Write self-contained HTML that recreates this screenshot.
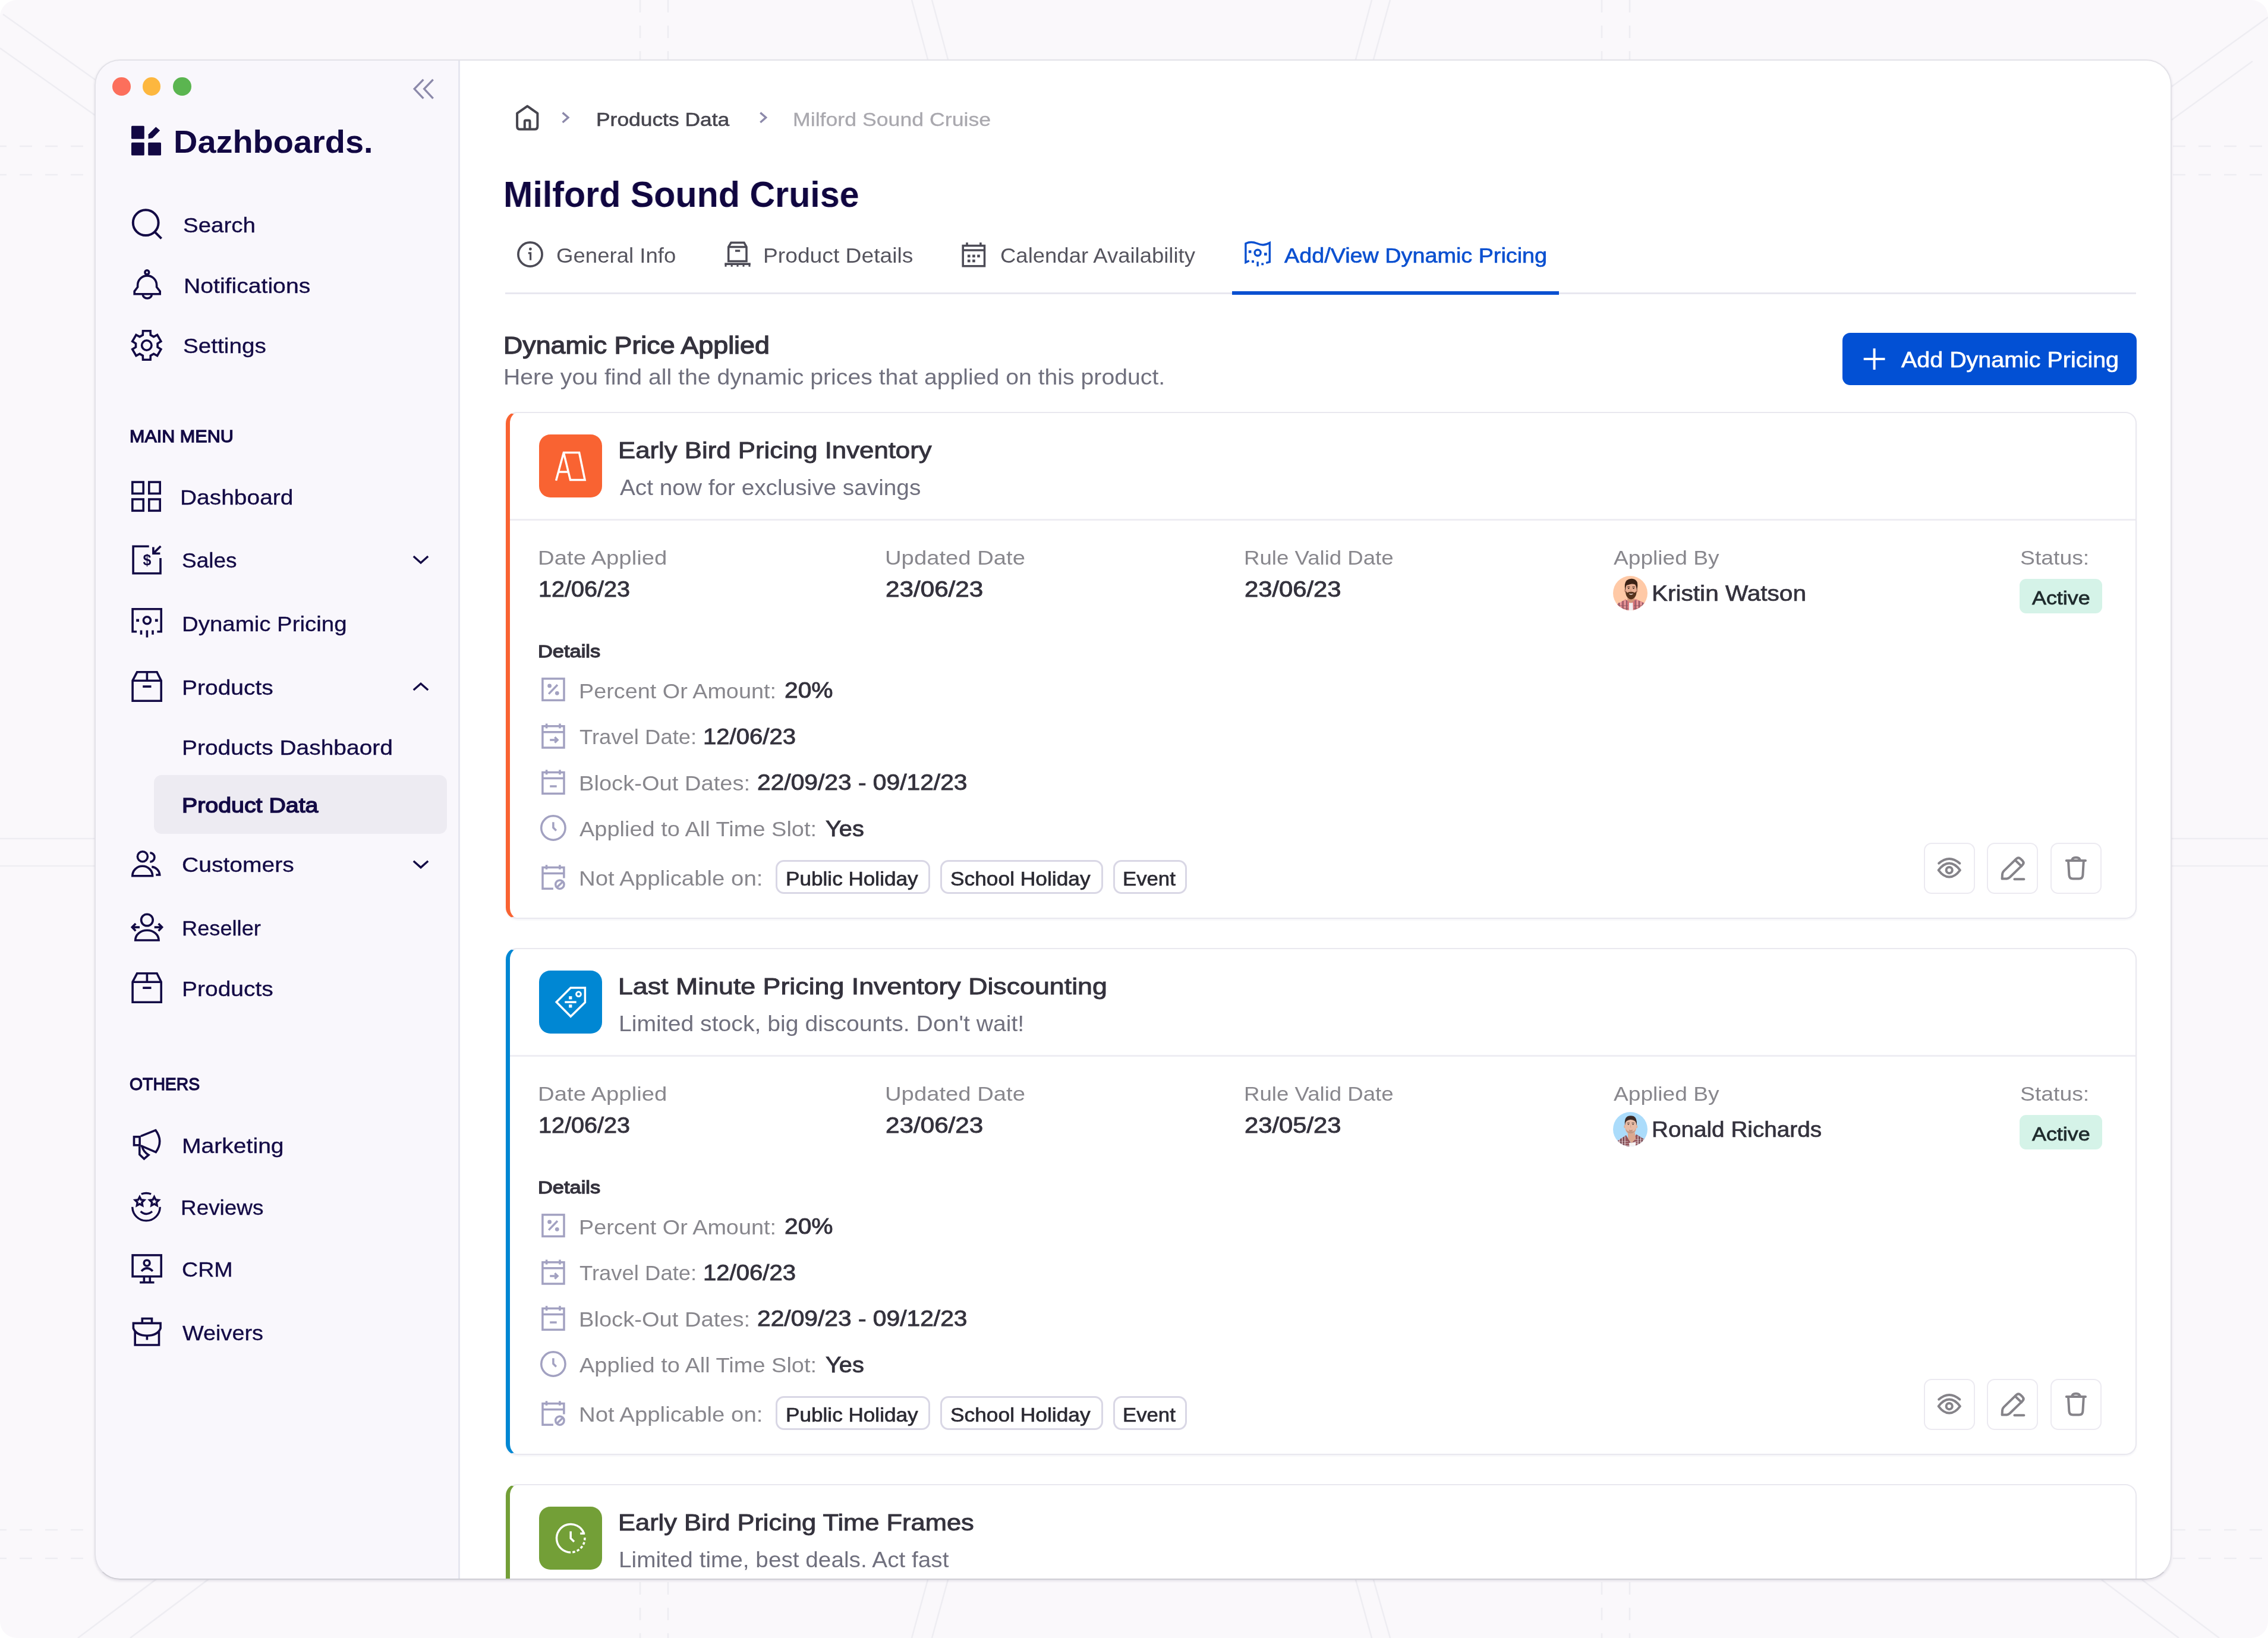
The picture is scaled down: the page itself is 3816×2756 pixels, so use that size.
<!DOCTYPE html>
<html lang="en">
<head>
<meta charset="utf-8">
<title>Dazhboards - Milford Sound Cruise - Dynamic Pricing</title>
<style>
*{box-sizing:border-box;margin:0;padding:0}
html,body{width:3816px;height:2756px;overflow:hidden}
body{position:relative;background:#faf8fb;font-family:"Liberation Sans",sans-serif;-webkit-font-smoothing:antialiased}
.bg{position:absolute;left:0;top:0}
.win{position:absolute;left:160px;top:101px;width:3493px;height:2556px;border-radius:42px;overflow:hidden;background:#fff}
.abs{position:absolute;left:-160px;top:-101px;width:3816px;height:2756px;will-change:transform}
.frame{position:absolute;left:159px;top:100px;width:3494.6px;height:2558.4px;border-radius:43px;border:2px solid #e3e2e8;border-bottom-color:#cfced5;pointer-events:none;box-shadow:0 2px 4px rgba(40,30,70,.12)}
.side{position:absolute;left:160px;top:101px;width:612px;height:2556px;background:#f9f7fc}
.sdiv{position:absolute;left:771.4px;top:101px;width:2.8px;height:2556px;background:#e6e6f0}
.t{position:absolute;white-space:nowrap;line-height:1;transform-origin:0 0}
.i{position:absolute;overflow:visible}
.dot{position:absolute;width:30.6px;height:30.6px;border-radius:50%}
.hl{position:absolute;background:#edebf2;border-radius:13px}
.tabline{position:absolute;background:#e8e7ef}
.tabact{position:absolute;background:#0b50d0}
.btn{position:absolute;background:#0250d4;border-radius:13px}
.card{position:absolute;background:#fff;border:2px solid #e9e8ef;border-left-width:7.4px;border-radius:19px;box-shadow:0 2px 3px rgba(70,60,120,.06)}
.tile{position:absolute;width:106.4px;height:106.4px;border-radius:19px}
.hr{position:absolute;height:2.8px;background:#eeedf3}
.badge{position:absolute;background:#d5f3e8;border-radius:11px}
.chip{position:absolute;border:3px solid #d9d7e5;border-radius:14px;background:#fff}
.abtn{position:absolute;width:86px;height:86px;border:2.6px solid #eceaf1;border-radius:13px;background:#fff}
</style>
</head>
<body>
<svg class="bg" width="3816" height="2756" viewBox="0 0 3816 2756" fill="none" stroke="#eeedf2" stroke-width="2.6">
<path d="M5 24 160 134M0 81 160 194M3816 29 3652 147M3790 103 3652 203M263 2657 131 2756M351 2657 219 2756M3536 2658 3666 2756M3604 2658 3734 2756"/>
<path d="M0 1411H160M0 1457H160M3654 1411H3816M3654 1457H3816"/>
<path d="M1534 0 1561 100M1568 0 1595 100M2308 0 2281 100M2339 0 2311 100M1561 2658 1534 2756M1595 2658 1568 2756M2281 2658 2308 2756M2311 2658 2339 2756"/>
<path stroke-dasharray="21 22" d="M140 246H0M140 294H0M3656 246H3816M3656 294H3816M140 2574H0M140 2622H0M3656 2574H3816M3656 2622H3816"/>
<path stroke-dasharray="21 22" d="M1077 0V100M1124 0V100M2695 0V100M2742 0V100M1077 2662V2756M1124 2662V2756M2695 2662V2756M2742 2662V2756"/>
<path fill="#fff" stroke="none" d="M0 0H28A28 28 0 0 0 0 28ZM3816 0V28A28 28 0 0 0 3788 0ZM0 2756V2728A28 28 0 0 0 28 2756ZM3816 2756H3788A28 28 0 0 0 3816 2728Z"/>
</svg>
<div class="win"><div class="abs">
<aside>
<div class="side"></div>
<div class="dot" style="left:189.1px;top:130.0px;background:#fc6f5c"></div>
<div class="dot" style="left:239.89999999999998px;top:130.0px;background:#fdb73f"></div>
<div class="dot" style="left:291.0px;top:130.0px;background:#5bb550"></div>
<svg class="i" style="left:690px;top:128px" width="46" height="44" viewBox="690 128 46 44" fill="none" stroke="#8c89aa" stroke-width="3.4" ><path d="M712.4 133.9 697.2 149.6 712.4 165.6M728.7 133.9 713.7 149.6 728.7 165.6"/></svg>
<svg class="i" style="left:221px;top:211px" width="52" height="52" viewBox="221 211 52 52" fill="#120843" stroke="none" stroke-width="0" ><rect x="221" y="211.8" width="21.8" height="22" rx="1.5"/><rect x="221" y="239.7" width="21.8" height="21.9" rx="1.5"/><rect x="249.2" y="239.7" width="21.8" height="21.9" rx="1.5"/><path d="M249.6 233.4 249.6 226.2 262.3 213.6 269.2 219.4 256.6 232.2Z"/></svg>
<div class="hl" style="left:259px;top:1303.7px;width:492.7px;height:99px"></div>
<svg class="i" style="left:219px;top:349px" width="58" height="58" viewBox="219 349 58 58" fill="none" stroke="#130a45" stroke-width="4" ><circle cx="245.2" cy="374.7" r="21.4"/><path d="M260.8 390.6 271.6 401.4"/></svg>
<svg class="i" style="left:219px;top:450px" width="58" height="58" viewBox="219 450 58 58" fill="none" stroke="#130a45" stroke-width="3.6" ><circle cx="247.3" cy="458.2" r="3.4"/><path d="M226.2 494.8V490.2L231.6 483V479.9A16 16 0 0 1 263.6 479.9V483L269.2 490.2V494.8Z"/><path d="M240.3 495.4A7.5 6.6 0 0 0 255.3 495.4"/></svg>
<svg class="i" style="left:217px;top:551px" width="62" height="62" viewBox="217 551 62 62" fill="none" stroke="#130a45" stroke-width="3.6" ><path d="M253.3 563.6 253.1 556.8 240.5 556.8 240.3 563.6 235.0 566.6 229.0 563.5 222.7 574.3 228.5 577.9 228.5 584.1 222.7 587.7 229.0 598.5 235.0 595.4 240.3 598.4 240.5 605.2 253.1 605.2 253.3 598.4 258.6 595.4 264.6 598.5 270.9 587.7 265.1 584.1 265.1 577.9 270.9 574.3 264.6 563.5 258.6 566.6Z" stroke-linejoin="miter"/><circle cx="246.8" cy="581" r="8.2"/></svg>
<svg class="i" style="left:219px;top:807px" width="56" height="58" viewBox="219 807 56 58" fill="none" stroke="#130a45" stroke-width="3.6" ><rect x="222.8" y="811.1" width="18.4" height="19.3"/><rect x="250.8" y="811.1" width="18.4" height="19.3"/><rect x="222.8" y="840" width="18.4" height="19.3"/><rect x="250.8" y="840" width="18.4" height="19.3"/></svg>
<svg class="i" style="left:219px;top:914px" width="58" height="56" viewBox="219 914 58 56" fill="none" stroke="#130a45" stroke-width="3.6" ><path d="M250.7 919.2H224.1V964.7H270V939"/><path d="M270.4 919 258.4 930.6M257.9 920.4V931.2H269.4"/><text x="247.4" y="950.6" text-anchor="middle" font-family="Liberation Sans, sans-serif" font-weight="700" font-size="25" fill="#130a45" stroke="none">$</text></svg>
<svg class="i" style="left:219px;top:1020px" width="58" height="56" viewBox="219 1020 58 56" fill="none" stroke="#130a45" stroke-width="3.6" ><path d="M230.1 1062.8H223.1V1024.7H271.2V1062.8H264.4"/><circle cx="247.4" cy="1043.8" r="6"/><path d="M237.5 1060.6V1067.7M247.4 1060.6V1072.6M257 1060.6V1067.7"/><rect x="229.2" y="1041.5" width="4.8" height="4.6" fill="#130a45" stroke="none"/><rect x="260.9" y="1041.5" width="4.8" height="4.6" fill="#130a45" stroke="none"/></svg>
<svg class="i" style="left:219px;top:1126.2px" width="58" height="58" viewBox="219 1126.2 58 58" fill="none" stroke="#130a45" stroke-width="3.6" ><path d="M223.1 1145.4 230.6 1131.0H264L271.2 1145.4V1179.4H223.1Z M223.1 1145.4H271.2 M247.4 1131.0V1145.4 M240.2 1155.3H254.5"/></svg>
<svg class="i" style="left:219px;top:1633.3px" width="58" height="58" viewBox="219 1633.3 58 58" fill="none" stroke="#130a45" stroke-width="3.6" ><path d="M223.1 1652.5 230.6 1638.1H264L271.2 1652.5V1686.5H223.1Z M223.1 1652.5H271.2 M247.4 1638.1V1652.5 M240.2 1662.3999999999999H254.5"/></svg>
<svg class="i" style="left:690px;top:930px" width="36" height="24" viewBox="690 930 36 24" fill="none" stroke="#130a45" stroke-width="3.4" ><path d="M695.8 936 708 947 720.2 936"/></svg>
<svg class="i" style="left:690px;top:1144px" width="36" height="24" viewBox="690 1144 36 24" fill="none" stroke="#130a45" stroke-width="3.4" ><path d="M695.8 1161 708 1150.3 720.2 1161"/></svg>
<svg class="i" style="left:690px;top:1442px" width="36" height="24" viewBox="690 1442 36 24" fill="none" stroke="#130a45" stroke-width="3.4" ><path d="M695.8 1448.7 708 1459.6 720.2 1448.7"/></svg>
<svg class="i" style="left:219px;top:1428px" width="58" height="52" viewBox="219 1428 58 52" fill="none" stroke="#130a45" stroke-width="3.6" ><circle cx="239.9" cy="1441.2" r="8.5"/><path d="M222.8 1473.7A16.9 16.4 0 0 1 256.6 1473.7Z"/><path d="M252.4 1434.9A7.6 7.6 0 0 1 252.4 1450.1"/><path d="M255.3 1458.4A14.6 14.6 0 0 1 268.7 1472H262.3"/></svg>
<svg class="i" style="left:217px;top:1534px" width="62" height="54" viewBox="217 1534 62 54" fill="none" stroke="#130a45" stroke-width="3.6" ><circle cx="247.4" cy="1548" r="9.8"/><path d="M227.7 1582A19.7 16.8 0 0 1 267.1 1582Z"/><path d="M222.6 1560.1H235M228.3 1554 222.3 1560.1 228.3 1566.2M259.7 1560.1H272.3M266.6 1554 272.6 1560.1 266.6 1566.2"/></svg>
<svg class="i" style="left:219px;top:1896px" width="58" height="60" viewBox="219 1896 58 60" fill="none" stroke="#130a45" stroke-width="3.6" ><rect x="225.5" y="1912.7" width="9.6" height="14.1"/><path d="M236.9 1911.6 261.8 1901.6Q275.4 1920 262.2 1938.6L236.9 1927.6"/><path d="M234.8 1928.5V1942.6L242.4 1949.8 250 1943.2Q241.3 1938 239.3 1929.6"/></svg>
<svg class="i" style="left:219px;top:2002px" width="58" height="58" viewBox="219 2002 58 58" fill="none" stroke="#130a45" stroke-width="3.4" ><path d="M222.8 2030.7A23.2 23.2 0 0 0 269.2 2030.7"/><path d="M237.8 2009A23.2 23.2 0 0 1 254.2 2009"/><path d="M235.0 2013.8 232.6 2018.6 227.4 2019.3 231.2 2023.0 230.3 2028.3 235.0 2025.8 239.7 2028.3 238.8 2023.0 242.6 2019.3 237.4 2018.6Z" stroke-linejoin="miter"/><path d="M259.5 2013.8 257.1 2018.6 251.9 2019.3 255.7 2023.0 254.8 2028.3 259.5 2025.8 264.2 2028.3 263.3 2023.0 267.1 2019.3 261.9 2018.6Z" stroke-linejoin="miter"/><path d="M236.6 2038.2Q246 2046.6 256 2038.2"/></svg>
<svg class="i" style="left:219px;top:2107px" width="58" height="56" viewBox="219 2107 58 56" fill="none" stroke="#130a45" stroke-width="3.6" ><rect x="223.1" y="2111.9" width="48.1" height="35.8"/><path d="M242.4 2148.5V2157M252.3 2148.5V2157M235.1 2157.7H259.5"/><circle cx="247.1" cy="2125.1" r="4.9"/><path d="M237.9 2138.8Q247.3 2129 256.9 2138.8"/></svg>
<svg class="i" style="left:219px;top:2213px" width="58" height="56" viewBox="219 2213 58 56" fill="none" stroke="#130a45" stroke-width="3.6" ><path d="M239.3 2226V2218.5H255.5V2226"/><path d="M224.4 2226.4H270.1V2235Q265 2247.2 247.4 2247.2 229.5 2247.2 224.4 2235Z"/><path d="M227.2 2240V2263H267.5V2240M247.4 2247.2V2254.4"/></svg>
<div class="t" style="left:291.9px;top:212.3px;font-size:54.4px;color:#120843;font-weight:700;transform:scaleX(1.0281)">Dazhboards.</div>
<div class="t" style="left:307.9px;top:362.3px;font-size:35.9px;color:#130a45;transform:scaleX(1.0717);-webkit-text-stroke:0.35px #130a45">Search</div>
<div class="t" style="left:308.8px;top:463.9px;font-size:35.9px;color:#130a45;transform:scaleX(1.0907);-webkit-text-stroke:0.35px #130a45">Notifications</div>
<div class="t" style="left:307.9px;top:564.6px;font-size:35.9px;color:#130a45;transform:scaleX(1.078);-webkit-text-stroke:0.35px #130a45">Settings</div>
<div class="t" style="left:218.2px;top:718.5px;font-size:29.3px;color:#130a45;transform:scaleX(1.0423);-webkit-text-stroke:1.3px #130a45">MAIN MENU</div>
<div class="t" style="left:303.4px;top:819.9px;font-size:35.9px;color:#130a45;transform:scaleX(1.0844);-webkit-text-stroke:0.35px #130a45">Dashboard</div>
<div class="t" style="left:305.7px;top:926.3px;font-size:35.9px;color:#130a45;transform:scaleX(1.0315);-webkit-text-stroke:0.35px #130a45">Sales</div>
<div class="t" style="left:306.3px;top:1033.3px;font-size:35.9px;color:#130a45;transform:scaleX(1.0704);-webkit-text-stroke:0.35px #130a45">Dynamic Pricing</div>
<div class="t" style="left:306.2px;top:1139.6px;font-size:35.9px;color:#130a45;transform:scaleX(1.0859);-webkit-text-stroke:0.35px #130a45">Products</div>
<div class="t" style="left:306.2px;top:1240.6px;font-size:35.9px;color:#130a45;transform:scaleX(1.0847);-webkit-text-stroke:0.35px #130a45">Products Dashbaord</div>
<div class="t" style="left:306.2px;top:1337.6px;font-size:35.9px;color:#130a45;transform:scaleX(1.0954);-webkit-text-stroke:1.5px #130a45">Product Data</div>
<div class="t" style="left:305.6px;top:1438.3px;font-size:35.9px;color:#130a45;transform:scaleX(1.0876);-webkit-text-stroke:0.35px #130a45">Customers</div>
<div class="t" style="left:306.4px;top:1544.9px;font-size:35.9px;color:#130a45;transform:scaleX(1.0093);-webkit-text-stroke:0.35px #130a45">Reseller</div>
<div class="t" style="left:306.2px;top:1646.6px;font-size:35.9px;color:#130a45;transform:scaleX(1.0859);-webkit-text-stroke:0.35px #130a45">Products</div>
<div class="t" style="left:218.3px;top:1809.2px;font-size:29.3px;color:#130a45;transform:scaleX(0.9682);-webkit-text-stroke:1.3px #130a45">OTHERS</div>
<div class="t" style="left:306.2px;top:1910.9px;font-size:35.9px;color:#130a45;transform:scaleX(1.089);-webkit-text-stroke:0.35px #130a45">Marketing</div>
<div class="t" style="left:304.2px;top:2014.9px;font-size:35.9px;color:#130a45;transform:scaleX(1.028);-webkit-text-stroke:0.35px #130a45">Reviews</div>
<div class="t" style="left:305.7px;top:2119.3px;font-size:35.9px;color:#130a45;transform:scaleX(1.0483);-webkit-text-stroke:0.35px #130a45">CRM</div>
<div class="t" style="left:306.7px;top:2225.9px;font-size:35.9px;color:#130a45;transform:scaleX(1.0545);-webkit-text-stroke:0.35px #130a45">Weivers</div>
<div class="sdiv"></div>
</aside>
<main>
<header>
<svg class="i" style="left:864px;top:172px" width="48" height="52" viewBox="864 172 48 52" fill="none" stroke="#46454e" stroke-width="4" stroke-linejoin="round"><path d="M870.1 190.6 887.3 178.6 904.4 190.6V212.4Q904.4 217.5 899.3 217.5H875.2Q870.1 217.5 870.1 212.4Z"/><path d="M882.8 217V204.5Q882.8 202.6 884.7 202.6H889.6Q891.5 202.6 891.5 204.5V217"/></svg>
<svg class="i" style="left:940px;top:184px" width="24" height="28" viewBox="940 184 24 28" fill="none" stroke="#8c89aa" stroke-width="3.4" ><path d="M946.6 189.6 956 197.8 946.6 206"/></svg>
<svg class="i" style="left:1272px;top:184px" width="24" height="28" viewBox="1272 184 24 28" fill="none" stroke="#8c89aa" stroke-width="3.4" ><path d="M1279.3 189.6 1288.7 197.8 1279.3 206"/></svg>
<div class="tabline" style="left:850px;top:491.7px;width:2744px;height:3.6px"></div>
<div class="tabact" style="left:2072.5px;top:490px;width:550px;height:6px"></div>
<svg class="i" style="left:866px;top:402px" width="52" height="52" viewBox="866 402 52 52" fill="none" stroke="#4c4b56" stroke-width="3.7" ><circle cx="892" cy="428" r="20.1"/><circle cx="892.4" cy="419" r="2.4" fill="#4c4b56" stroke="none"/><path d="M888.8 425.9H892.6V437.8" stroke-width="3.2"/></svg>
<svg class="i" style="left:1215px;top:402px" width="52" height="50" viewBox="1215 402 52 50" fill="none" stroke="#4c4b56" stroke-width="3.5" ><path d="M1225.7 415.4 1230 408.3H1252L1256 415.4V439.4H1225.7Z M1225.7 415.4H1256 M1237 421.9H1245.2"/><path d="M1219.3 444.2H1262.8" stroke-width="3.8"/><path d="M1221 445V448.7M1231.2 445V448.7M1241 445V448.7M1251 445V448.7M1261 445V448.7" stroke-width="3"/></svg>
<svg class="i" style="left:1614px;top:404px" width="50" height="50" viewBox="1614 404 50 50" fill="none" stroke="#4c4b56" stroke-width="3.5" ><rect x="1620.2" y="413.4" width="36.3" height="34.3"/><path d="M1620.2 421H1656.5M1627 408V414.4M1649.9 408V414.4"/><rect x="1627.9" y="428.5" width="4.6" height="4.6" fill="#4c4b56" stroke="none"/><rect x="1636.1000000000001" y="428.5" width="4.6" height="4.6" fill="#4c4b56" stroke="none"/><rect x="1644.2" y="428.5" width="4.6" height="4.6" fill="#4c4b56" stroke="none"/><rect x="1627.9" y="436.7" width="4.6" height="4.6" fill="#4c4b56" stroke="none"/><rect x="1636.1000000000001" y="436.7" width="4.6" height="4.6" fill="#4c4b56" stroke="none"/></svg>
<svg class="i" style="left:2090px;top:402px" width="54" height="52" viewBox="2090 402 54 52" fill="none" stroke="#0b50d0" stroke-width="3.4" ><path d="M2101.8 438.8 2095.9 441.5V409.7C2101 407.2 2108 406.7 2114.9 409.5S2127.5 413.6 2136.3 408.6V440.6L2130.2 442.3"/><circle cx="2116.1" cy="425.2" r="5"/><path d="M2116.1 440.2V448.2"/><g fill="#0b50d0" stroke="none"><rect x="2100.8" y="421.2" width="4.6" height="4.5"/><rect x="2127" y="425.3" width="4.7" height="4.6"/><rect x="2106" y="438" width="4" height="4"/><rect x="2122.3" y="442.4" width="3.8" height="3.8"/></g></svg>
<div class="btn" style="left:3100.2px;top:560.2px;width:494.8px;height:87.5px"></div>
<svg class="i" style="left:3130px;top:582px" width="48" height="44" viewBox="3130 582 48 44" fill="none" stroke="#fff" stroke-width="4" ><path d="M3153.6 586.2V622M3135.7 604H3171.5"/></svg>
<div class="t" style="left:1002.7px;top:185.9px;font-size:31.2px;color:#46454e;transform:scaleX(1.1346);-webkit-text-stroke:0.6px #46454e">Products Data</div>
<div class="t" style="left:1334.4px;top:185.9px;font-size:31.2px;color:#a9a8ae;transform:scaleX(1.1439);-webkit-text-stroke:0.3px #a9a8ae">Milford Sound Cruise</div>
<div class="t" style="left:847.1px;top:297.1px;font-size:60.5px;color:#100640;font-weight:700;transform:scaleX(0.9785)">Milford Sound Cruise</div>
<div class="t" style="left:935.7px;top:412.6px;font-size:35.9px;color:#55545e;transform:scaleX(1.0191)">General Info</div>
<div class="t" style="left:1283.6px;top:412.6px;font-size:35.9px;color:#55545e;transform:scaleX(1.0369)">Product Details</div>
<div class="t" style="left:1682.5px;top:413.1px;font-size:35.9px;color:#55545e;transform:scaleX(1.0168)">Calendar Availability</div>
<div class="t" style="left:2161.0px;top:413.1px;font-size:35.9px;color:#0b50d0;transform:scaleX(1.052);-webkit-text-stroke:0.7px #0b50d0">Add/View Dynamic Pricing</div>
<div class="t" style="left:846.7px;top:560.9px;font-size:41.1px;color:#34323d;transform:scaleX(1.0893);-webkit-text-stroke:1.35px #34323d">Dynamic Price Applied</div>
<div class="t" style="left:846.8px;top:617.3px;font-size:36.9px;color:#70707e;transform:scaleX(1.0623)">Here you find all the dynamic prices that applied on this product.</div>
<div class="t" style="left:3199.4px;top:587.8px;font-size:36.9px;color:#ffffff;transform:scaleX(1.069);-webkit-text-stroke:0.7px #ffffff">Add Dynamic Pricing</div>
</header>
<section>
<div class="card" style="left:851px;top:692.6px;width:2743.6px;height:853px;border-left-color:#f96332"></div>
<div class="tile" style="left:906.9px;top:731.1px;background:#f96332"></div>
<svg class="i" style="left:906.9px;top:731.1px" width="106.4" height="106.4" viewBox="906.9 731.1 106.4 106.4" fill="none" stroke="#fff" stroke-width="3.5" ><path d="M935.5 808.7 948.3 761.7H974.5L984.0 807.7H959.5L948.3 761.7M940.1 794.2H955.5"/></svg>
<div class="hr" style="left:858px;top:873.3px;width:2734.6px"></div>
<svg class="i" style="left:2713.8px;top:969px" width="58" height="58" viewBox="2713.8 969 58 58"><defs><clipPath id="av1998"><circle cx="2742.8" cy="998" r="29"/></clipPath><filter id="fav1998" x="-5%" y="-5%" width="110%" height="110%"><feGaussianBlur stdDeviation=".45"/></filter></defs><g clip-path="url(#av1998)"><rect x="2713.8" y="969" width="58" height="58" fill="#ffc9a6"/><g filter="url(#fav1998)"><path d="M 2717.8 1018.0 L 2734.8 1008.5 L 2743.8 1014.0 L 2751.8 1008.0 L 2768.8 1015.5 L 2768.8 1029.0 L 2717.8 1029.0 Z" fill="#d8747a"/><path d="M 2723.8 1014.0 L 2723.8 1029.0 M 2730.3 1011.0 L 2730.3 1029.0 M 2736.8 1010.0 L 2736.8 1029.0 M 2751.3 1010.0 L 2751.3 1029.0 M 2757.8 1011.0 L 2757.8 1029.0 M 2763.8 1014.0 L 2763.8 1029.0" stroke="#7a5a68" stroke-width="1.8" opacity=".8"/><path d="M 2726.8 1012.0 L 2726.8 1029.0 M 2733.8 1010.0 L 2733.8 1029.0 M 2754.8 1010.0 L 2754.8 1029.0 M 2760.8 1013.0 L 2760.8 1029.0" stroke="#f6cfcb" stroke-width="1.3" opacity=".8"/><path d="M 2718.8 1019.0 L 2738.8 1019.0 M 2718.8 1024.0 L 2739.8 1024.0 M 2748.8 1019.0 L 2767.8 1019.0 M 2747.8 1024.0 L 2767.8 1024.0" stroke="#8e5560" stroke-width="1.3" opacity=".6"/><path d="M 2740.8 1014.0 L 2747.2 1014.0 L 2747.6 1029.0 L 2740.4 1029.0 Z" fill="#f1eef0"/><path d="M 2738.4 1002.0 L 2749.8 1002.0 L 2750.2 1010.0 L 2744.0 1015.0 L 2738.0 1010.0 Z" fill="#d39578"/><ellipse cx="2734.2000000000003" cy="994" rx="1.8" ry="2.6" fill="#dc9e82"/><ellipse cx="2754.0" cy="994" rx="1.8" ry="2.6" fill="#dc9e82"/><path d="M 2734.1 993.0 Q 2732.1 981.0 2736.8 976.6 Q 2740.8 973.2 2745.8 973.8 Q 2751.8 974.4 2754.3 979.0 Q 2756.0 983.0 2754.1 993.0 Z" fill="#3b2118"/><path d="M 2734.6 993.0 Q 2734.8 987.6 2736.4 984.8 Q 2738.2 984.2 2741.8 983.2 Q 2746.8 981.6 2751.2 983.8 Q 2753.2 986.6 2753.6 993.0 Q 2753.6 1006.4 2744.1 1006.4 Q 2734.6 1006.4 2734.6 993.0 Z" fill="#e8ae92"/><path d="M 2734.6 993.0 Q 2734.8 1002.0 2738.3 1005.5 Q 2741.3 1008.4 2744.1 1008.4 Q 2747.0 1008.4 2750.0 1005.5 Q 2753.4 1002.0 2753.6 993.0 Q 2752.4 996.4 2750.2 997.2 Q 2747.2 995.6 2744.1 995.8 Q 2741.0 995.6 2738.0 997.2 Q 2735.8 996.4 2734.6 993.0 Z" fill="#55301f"/><path d="M 2740.8 999.2 Q 2744.1 1001.6 2747.4 999.2 Q 2744.1 1000.0 2740.8 999.2 Z" fill="#f4e4dc" stroke="#f4e4dc" stroke-width=".6"/><ellipse cx="2740.0" cy="989.9" rx="1.4" ry=".95" fill="#3a241c"/><ellipse cx="2748.3" cy="989.9" rx="1.4" ry=".95" fill="#3a241c"/><path d="M 2737.8 987.8 Q 2740.0 986.7 2742.2 987.7 M 2746.1 987.7 Q 2748.3 986.7 2750.5 987.8" stroke="#4a2b1f" stroke-width="1.1" fill="none"/><path d="M 2744.1 990.5 L 2743.5 994.3 L 2744.8 994.5" stroke="#cf9478" stroke-width=".9" fill="none"/></g></g></svg>
<div class="badge" style="left:3398.3px;top:974px;width:138.4px;height:57.7px"></div>
<div class="chip" style="left:1305px;top:1446.5px;width:260px;height:57px"></div>
<div class="chip" style="left:1581.5px;top:1446.5px;width:274.5px;height:57px"></div>
<div class="chip" style="left:1872.5px;top:1446.5px;width:124.5px;height:57px"></div>
<svg class="i" style="left:908px;top:1137px" width="46" height="46" viewBox="908 1137 46 46" fill="none" stroke="#a2a1c1" stroke-width="3.5" ><rect x="912.9" y="1141.9" width="36.1" height="36.3"/><path d="M923.2 1167.6 938 1152.2"/><circle cx="924.6" cy="1153.9" r="3.4" fill="#a2a1c1" stroke="none"/><circle cx="937.3" cy="1166.3" r="3.4" fill="#a2a1c1" stroke="none"/></svg>
<svg class="i" style="left:908px;top:1214px" width="46" height="48" viewBox="908 1214 46 48" fill="none" stroke="#a2a1c1" stroke-width="3.5" ><rect x="912.9" y="1221.8" width="36.1" height="36.2"/><path d="M912.9 1231.7H949M919.6 1217.4V1225.4M942 1217.4V1225.4M925.2 1244.9H938M933.4 1240.2 938.1 1244.9 933.4 1249.6"/></svg>
<svg class="i" style="left:908px;top:1292px" width="46" height="48" viewBox="908 1292 46 48" fill="none" stroke="#a2a1c1" stroke-width="3.5" ><rect x="912.9" y="1299.5" width="36.1" height="35.8"/><path d="M912.9 1309.4H949M919.6 1295.3V1303.3M942 1295.3V1303.3M925.2 1322.9H936.7"/></svg>
<svg class="i" style="left:906px;top:1368px" width="50" height="50" viewBox="906 1368 50 50" fill="none" stroke="#a2a1c1" stroke-width="3.5" ><circle cx="930.9" cy="1393" r="20.2"/><path d="M930.9 1383.2V1392.6L935.9 1397.6"/></svg>
<svg class="i" style="left:908px;top:1452px" width="46" height="50" viewBox="908 1452 46 50" fill="none" stroke="#a2a1c1" stroke-width="3.5" ><path d="M930.9 1495.3H913V1459.6H948.9V1477.4M913 1469.4H948.9M919.5 1455.2V1462.8M941.9 1455.2V1462.8"/><circle cx="941.9" cy="1488.2" r="7.2"/><path d="M937 1493 946.9 1483.4"/></svg>
<div class="abtn" style="left:3236.5px;top:1417.7px"></div>
<div class="abtn" style="left:3343.4px;top:1417.7px"></div>
<div class="abtn" style="left:3450px;top:1417.7px"></div>
<svg class="i" style="left:3255px;top:1436px" width="50" height="50" viewBox="3255 1436 50 50" fill="none" stroke="#858389" stroke-width="4" stroke-linecap="round" stroke-linejoin="round"><path d="M3261.6 1464.1Q3270.2 1452.4 3279.7 1452.4 3289.3 1452.4 3297.9 1464.1 3289.3 1475.6 3279.7 1475.6 3270.2 1475.6 3261.6 1464.1Z"/><circle cx="3279.7" cy="1464.1" r="5.1"/><path d="M3262.2 1452.6Q3279.7 1437.4 3297.3 1452.6"/></svg>
<svg class="i" style="left:3362px;top:1436px" width="50" height="50" viewBox="3362 1436 50 50" fill="none" stroke="#858389" stroke-width="4" stroke-linecap="round" stroke-linejoin="round"><path d="M3368.6 1478.6 3369 1470.8Q3369.3 1467.6 3371.6 1465.4L3392.6 1444.9Q3396.1 1441.7 3399.6 1444.9L3403.2 1448.5Q3406.2 1451.8 3403.1 1455.1L3381.6 1476Q3379.4 1478 3376.4 1478.4Z"/><path d="M3390.6 1447.2 3401.2 1457.4M3389.4 1479.2H3405.4"/></svg>
<svg class="i" style="left:3470px;top:1436px" width="46" height="50" viewBox="3470 1436 46 50" fill="none" stroke="#858389" stroke-width="4" stroke-linecap="round" stroke-linejoin="round"><path d="M3476.8 1448H3509M3486.4 1447.6Q3486.4 1442.8 3492.9 1442.8 3499.4 1442.8 3499.4 1447.6M3480 1448.4 3481.4 1472.4Q3481.8 1478.6 3487.8 1478.6H3498Q3504 1478.6 3504.4 1472.4L3505.8 1448.4"/></svg>
<div class="t" style="left:1039.9px;top:738.9px;font-size:38.7px;color:#34323d;transform:scaleX(1.1309);-webkit-text-stroke:0.95px #34323d">Early Bird Pricing Inventory</div>
<div class="t" style="left:1043.3px;top:802.5px;font-size:36.4px;color:#70707e;transform:scaleX(1.0652)">Act now for exclusive savings</div>
<div class="t" style="left:905.4px;top:920.5px;font-size:34.0px;color:#88878d;transform:scaleX(1.127)">Date Applied</div>
<div class="t" style="left:1489.4px;top:920.5px;font-size:34.0px;color:#88878d;transform:scaleX(1.1247)">Updated Date</div>
<div class="t" style="left:2092.8px;top:920.5px;font-size:34.0px;color:#88878d;transform:scaleX(1.0767)">Rule Valid Date</div>
<div class="t" style="left:2715.0px;top:920.5px;font-size:34.0px;color:#88878d;transform:scaleX(1.092)">Applied By</div>
<div class="t" style="left:3398.7px;top:920.5px;font-size:34.0px;color:#88878d;transform:scaleX(1.0978)">Status:</div>
<div class="t" style="left:905.5px;top:974.2px;font-size:36.4px;color:#34323d;transform:scaleX(1.088);-webkit-text-stroke:0.9px #34323d">12/06/23</div>
<div class="t" style="left:1490.4px;top:974.2px;font-size:36.4px;color:#34323d;transform:scaleX(1.1598);-webkit-text-stroke:0.9px #34323d">23/06/23</div>
<div class="t" style="left:2093.9px;top:974.2px;font-size:36.4px;color:#34323d;transform:scaleX(1.1477);-webkit-text-stroke:0.9px #34323d">23/06/23</div>
<div class="t" style="left:2779.2px;top:981.3px;font-size:36.9px;color:#34323d;transform:scaleX(1.0995);-webkit-text-stroke:0.7px #34323d">Kristin Watson</div>
<div class="t" style="left:3418.8px;top:990.1px;font-size:32.1px;color:#1f2b2d;transform:scaleX(1.1178);-webkit-text-stroke:0.8px #1f2b2d">Active</div>
<div class="t" style="left:905.4px;top:1081.1px;font-size:30.2px;color:#34323d;transform:scaleX(1.1393);-webkit-text-stroke:1.3px #34323d">Details</div>
<div class="t" style="left:973.8px;top:1145.8px;font-size:34.5px;color:#88878d;transform:scaleX(1.0956)">Percent Or Amount:</div>
<div class="t" style="left:1320.4px;top:1144.2px;font-size:36.4px;color:#34323d;transform:scaleX(1.1192);-webkit-text-stroke:0.9px #34323d">20%</div>
<div class="t" style="left:974.5px;top:1223.3px;font-size:34.5px;color:#88878d;transform:scaleX(1.0569)">Travel Date:</div>
<div class="t" style="left:1182.8px;top:1221.7px;font-size:36.4px;color:#34323d;transform:scaleX(1.1018);-webkit-text-stroke:0.9px #34323d">12/06/23</div>
<div class="t" style="left:973.8px;top:1300.8px;font-size:34.5px;color:#88878d;transform:scaleX(1.1047)">Block-Out Dates:</div>
<div class="t" style="left:1273.9px;top:1299.2px;font-size:36.4px;color:#34323d;transform:scaleX(1.1199);-webkit-text-stroke:0.9px #34323d">22/09/23 - 09/12/23</div>
<div class="t" style="left:974.5px;top:1378.3px;font-size:34.5px;color:#88878d;transform:scaleX(1.1011)">Applied to All Time Slot:</div>
<div class="t" style="left:1389.0px;top:1376.7px;font-size:36.4px;color:#34323d;transform:scaleX(1.0916);-webkit-text-stroke:0.9px #34323d">Yes</div>
<div class="t" style="left:973.8px;top:1460.8px;font-size:34.5px;color:#88878d;transform:scaleX(1.1128)">Not Applicable on:</div>
<div class="t" style="left:1321.9px;top:1462.0px;font-size:33.1px;color:#2b2a33;transform:scaleX(1.0622);-webkit-text-stroke:0.7px #2b2a33">Public Holiday</div>
<div class="t" style="left:1598.9px;top:1462.0px;font-size:33.1px;color:#2b2a33;transform:scaleX(1.0677);-webkit-text-stroke:0.7px #2b2a33">School Holiday</div>
<div class="t" style="left:1889.4px;top:1462.0px;font-size:33.1px;color:#2b2a33;transform:scaleX(1.0498);-webkit-text-stroke:0.7px #2b2a33">Event</div>
</section>
<section>
<div class="card" style="left:851px;top:1594.6px;width:2743.6px;height:853px;border-left-color:#0087d3"></div>
<div class="tile" style="left:906.9px;top:1633.1px;background:#0087d3"></div>
<svg class="i" style="left:906.9px;top:1633.1px" width="106.4" height="106.4" viewBox="906.9 1633.1 106.4 106.4" fill="none" stroke="#fff" stroke-width="3.5" ><path d="M960.1 1662.1H984.3V1686.5L960.1 1710.3 936.1 1686.1Z" stroke-linejoin="miter"/><circle cx="973.4" cy="1672.8" r="3.9" stroke-width="3"/><path d="M950.1999999999999 1686.1999999999998H969.6"/><rect x="957.1" y="1676.3" width="5.2" height="5.2" fill="#fff" stroke="none"/><rect x="957.1" y="1690.3" width="5.2" height="5.2" fill="#fff" stroke="none"/></svg>
<div class="hr" style="left:858px;top:1775.3px;width:2734.6px"></div>
<svg class="i" style="left:2713.8px;top:1871px" width="58" height="58" viewBox="2713.8 1871 58 58"><defs><clipPath id="av21900"><circle cx="2742.8" cy="1900" r="29"/></clipPath><filter id="fav21900" x="-5%" y="-5%" width="110%" height="110%"><feGaussianBlur stdDeviation=".45"/></filter></defs><g clip-path="url(#av21900)"><rect x="2713.8" y="1871" width="58" height="58" fill="#abdcfb"/><g filter="url(#fav21900)"><path d="M 2720.8 1920.0 L 2735.8 1910.0 L 2744.3 1924.0 L 2752.8 1908.6 L 2766.8 1917.0 L 2768.8 1931.0 L 2720.8 1931.0 Z" fill="#93535a"/><path d="M 2724.8 1917.0 L 2724.8 1931.0 M 2729.3 1914.5 L 2729.3 1931.0 M 2733.8 1912.0 L 2733.8 1931.0 M 2755.8 1911.0 L 2755.8 1931.0 M 2760.3 1913.5 L 2760.3 1931.0 M 2764.8 1916.5 L 2764.8 1931.0" stroke="#e4d6da" stroke-width="1.5" opacity=".8"/><path d="M 2721.8 1920.5 L 2739.3 1920.5 M 2721.8 1924.0 L 2741.3 1924.0 M 2721.8 1927.5 L 2742.8 1927.5 M 2750.8 1917.5 L 2766.8 1917.5 M 2749.8 1921.0 L 2767.8 1921.0 M 2748.8 1924.5 L 2767.8 1924.5 M 2747.8 1928.0 L 2767.8 1928.0" stroke="#d9c9ce" stroke-width="1.2" opacity=".7"/><path d="M 2727.0 1915.5 L 2727.0 1931.0 M 2731.6 1913.0 L 2731.6 1931.0 M 2758.0 1912.0 L 2758.0 1931.0 M 2762.6 1915.0 L 2762.6 1931.0" stroke="#4f3a44" stroke-width="1.2" opacity=".7"/><path d="M 2740.8 1923.0 L 2752.3 1921.5 L 2751.3 1931.0 L 2741.3 1931.0 Z" fill="#f5f3f4"/><path d="M 2738.2 1903.0 L 2750.0 1903.0 L 2752.2 1916.0 L 2744.8 1923.6 L 2739.2 1916.0 Z" fill="#dba88f"/><ellipse cx="2733.7000000000003" cy="1895.4" rx="1.7" ry="2.7" fill="#dfae97"/><ellipse cx="2753.4" cy="1895.4" rx="1.7" ry="2.7" fill="#dfae97"/><path d="M 2733.7 1893.0 Q 2732.6 1882.0 2737.8 1878.6 Q 2742.8 1876.0 2748.4 1878.0 Q 2754.6 1881.0 2753.6 1893.0 Z" fill="#3a2926"/><path d="M 2733.9 1893.0 Q 2734.3 1888.2 2736.4 1886.2 Q 2739.8 1883.7 2743.6 1883.7 Q 2747.4 1883.7 2750.8 1886.2 Q 2752.9 1888.2 2753.3 1893.0 L 2753.3 1895.0 Q 2753.3 1907.7 2743.6 1907.7 Q 2733.9 1907.7 2733.9 1895.0 Z" fill="#e7bba5"/><path d="M 2734.8 1898.0 Q 2735.8 1906.8 2743.6 1907.6 Q 2751.4 1906.8 2752.4 1898.0 Q 2750.6 1902.8 2747.4 1903.6 Q 2743.6 1902.2 2739.8 1903.6 Q 2736.6 1902.8 2734.8 1898.0 Z" fill="#b58d7b" opacity=".75"/><path d="M 2740.8 1901.6 Q 2743.6 1903.2 2746.6 1901.6" stroke="#a7705f" stroke-width="1" fill="none"/><ellipse cx="2739.6000000000004" cy="1891.6" rx="1.5" ry=".9" fill="#4b3a36"/><ellipse cx="2747.4" cy="1891.6" rx="1.5" ry=".9" fill="#4b3a36"/><path d="M 2737.4 1889.6 Q 2739.6 1888.6 2741.8 1889.5 M 2745.2 1889.5 Q 2747.4 1888.6 2749.6 1889.6" stroke="#5a4641" stroke-width="1" fill="none"/><path d="M 2743.6 1892.5 L 2743.1 1896.6 L 2744.4 1896.8" stroke="#cf9f8a" stroke-width=".9" fill="none"/></g></g></svg>
<div class="badge" style="left:3398.3px;top:1876px;width:138.4px;height:57.7px"></div>
<div class="chip" style="left:1305px;top:2348.5px;width:260px;height:57px"></div>
<div class="chip" style="left:1581.5px;top:2348.5px;width:274.5px;height:57px"></div>
<div class="chip" style="left:1872.5px;top:2348.5px;width:124.5px;height:57px"></div>
<svg class="i" style="left:908px;top:2039px" width="46" height="46" viewBox="908 2039 46 46" fill="none" stroke="#a2a1c1" stroke-width="3.5" ><rect x="912.9" y="2043.9" width="36.1" height="36.3"/><path d="M923.2 2069.6 938 2054.2"/><circle cx="924.6" cy="2055.9" r="3.4" fill="#a2a1c1" stroke="none"/><circle cx="937.3" cy="2068.3" r="3.4" fill="#a2a1c1" stroke="none"/></svg>
<svg class="i" style="left:908px;top:2116px" width="46" height="48" viewBox="908 2116 46 48" fill="none" stroke="#a2a1c1" stroke-width="3.5" ><rect x="912.9" y="2123.8" width="36.1" height="36.2"/><path d="M912.9 2133.7H949M919.6 2119.4V2127.4M942 2119.4V2127.4M925.2 2146.9H938M933.4 2142.2 938.1 2146.9 933.4 2151.6"/></svg>
<svg class="i" style="left:908px;top:2194px" width="46" height="48" viewBox="908 2194 46 48" fill="none" stroke="#a2a1c1" stroke-width="3.5" ><rect x="912.9" y="2201.5" width="36.1" height="35.8"/><path d="M912.9 2211.4H949M919.6 2197.3V2205.3M942 2197.3V2205.3M925.2 2224.9H936.7"/></svg>
<svg class="i" style="left:906px;top:2270px" width="50" height="50" viewBox="906 2270 50 50" fill="none" stroke="#a2a1c1" stroke-width="3.5" ><circle cx="930.9" cy="2295" r="20.2"/><path d="M930.9 2285.2V2294.6L935.9 2299.6"/></svg>
<svg class="i" style="left:908px;top:2354px" width="46" height="50" viewBox="908 2354 46 50" fill="none" stroke="#a2a1c1" stroke-width="3.5" ><path d="M930.9 2397.3H913V2361.6H948.9V2379.4M913 2371.4H948.9M919.5 2357.2V2364.8M941.9 2357.2V2364.8"/><circle cx="941.9" cy="2390.2" r="7.2"/><path d="M937 2395 946.9 2385.4"/></svg>
<div class="abtn" style="left:3236.5px;top:2319.7px"></div>
<div class="abtn" style="left:3343.4px;top:2319.7px"></div>
<div class="abtn" style="left:3450px;top:2319.7px"></div>
<svg class="i" style="left:3255px;top:2338px" width="50" height="50" viewBox="3255 2338 50 50" fill="none" stroke="#858389" stroke-width="4" stroke-linecap="round" stroke-linejoin="round"><path d="M3261.6 2366.1Q3270.2 2354.4 3279.7 2354.4 3289.3 2354.4 3297.9 2366.1 3289.3 2377.6 3279.7 2377.6 3270.2 2377.6 3261.6 2366.1Z"/><circle cx="3279.7" cy="2366.1" r="5.1"/><path d="M3262.2 2354.6Q3279.7 2339.4 3297.3 2354.6"/></svg>
<svg class="i" style="left:3362px;top:2338px" width="50" height="50" viewBox="3362 2338 50 50" fill="none" stroke="#858389" stroke-width="4" stroke-linecap="round" stroke-linejoin="round"><path d="M3368.6 2380.6 3369 2372.8Q3369.3 2369.6 3371.6 2367.4L3392.6 2346.9Q3396.1 2343.7 3399.6 2346.9L3403.2 2350.5Q3406.2 2353.8 3403.1 2357.1L3381.6 2378Q3379.4 2380 3376.4 2380.4Z"/><path d="M3390.6 2349.2 3401.2 2359.4M3389.4 2381.2H3405.4"/></svg>
<svg class="i" style="left:3470px;top:2338px" width="46" height="50" viewBox="3470 2338 46 50" fill="none" stroke="#858389" stroke-width="4" stroke-linecap="round" stroke-linejoin="round"><path d="M3476.8 2350H3509M3486.4 2349.6Q3486.4 2344.8 3492.9 2344.8 3499.4 2344.8 3499.4 2349.6M3480 2350.4 3481.4 2374.4Q3481.8 2380.6 3487.8 2380.6H3498Q3504 2380.6 3504.4 2374.4L3505.8 2350.4"/></svg>
<div class="t" style="left:1039.8px;top:1640.9px;font-size:38.7px;color:#34323d;transform:scaleX(1.156);-webkit-text-stroke:0.95px #34323d">Last Minute Pricing Inventory Discounting</div>
<div class="t" style="left:1041.1px;top:1704.5px;font-size:36.4px;color:#70707e;transform:scaleX(1.0761)">Limited stock, big discounts. Don't wait!</div>
<div class="t" style="left:905.4px;top:1822.5px;font-size:34.0px;color:#88878d;transform:scaleX(1.127)">Date Applied</div>
<div class="t" style="left:1489.4px;top:1822.5px;font-size:34.0px;color:#88878d;transform:scaleX(1.1247)">Updated Date</div>
<div class="t" style="left:2092.8px;top:1822.5px;font-size:34.0px;color:#88878d;transform:scaleX(1.0767)">Rule Valid Date</div>
<div class="t" style="left:2715.0px;top:1822.5px;font-size:34.0px;color:#88878d;transform:scaleX(1.092)">Applied By</div>
<div class="t" style="left:3398.7px;top:1822.5px;font-size:34.0px;color:#88878d;transform:scaleX(1.0978)">Status:</div>
<div class="t" style="left:905.5px;top:1876.2px;font-size:36.4px;color:#34323d;transform:scaleX(1.088);-webkit-text-stroke:0.9px #34323d">12/06/23</div>
<div class="t" style="left:1490.4px;top:1876.2px;font-size:36.4px;color:#34323d;transform:scaleX(1.1598);-webkit-text-stroke:0.9px #34323d">23/06/23</div>
<div class="t" style="left:2093.9px;top:1876.2px;font-size:36.4px;color:#34323d;transform:scaleX(1.1477);-webkit-text-stroke:0.9px #34323d">23/05/23</div>
<div class="t" style="left:2779.4px;top:1883.3px;font-size:36.9px;color:#34323d;transform:scaleX(1.0491);-webkit-text-stroke:0.7px #34323d">Ronald Richards</div>
<div class="t" style="left:3418.8px;top:1892.1px;font-size:32.1px;color:#1f2b2d;transform:scaleX(1.1178);-webkit-text-stroke:0.8px #1f2b2d">Active</div>
<div class="t" style="left:905.4px;top:1983.1px;font-size:30.2px;color:#34323d;transform:scaleX(1.1393);-webkit-text-stroke:1.3px #34323d">Details</div>
<div class="t" style="left:973.8px;top:2047.8px;font-size:34.5px;color:#88878d;transform:scaleX(1.0956)">Percent Or Amount:</div>
<div class="t" style="left:1320.4px;top:2046.2px;font-size:36.4px;color:#34323d;transform:scaleX(1.1192);-webkit-text-stroke:0.9px #34323d">20%</div>
<div class="t" style="left:974.5px;top:2125.3px;font-size:34.5px;color:#88878d;transform:scaleX(1.0569)">Travel Date:</div>
<div class="t" style="left:1182.8px;top:2123.7px;font-size:36.4px;color:#34323d;transform:scaleX(1.1018);-webkit-text-stroke:0.9px #34323d">12/06/23</div>
<div class="t" style="left:973.8px;top:2202.8px;font-size:34.5px;color:#88878d;transform:scaleX(1.1047)">Block-Out Dates:</div>
<div class="t" style="left:1273.9px;top:2201.2px;font-size:36.4px;color:#34323d;transform:scaleX(1.1199);-webkit-text-stroke:0.9px #34323d">22/09/23 - 09/12/23</div>
<div class="t" style="left:974.5px;top:2280.3px;font-size:34.5px;color:#88878d;transform:scaleX(1.1011)">Applied to All Time Slot:</div>
<div class="t" style="left:1389.0px;top:2278.7px;font-size:36.4px;color:#34323d;transform:scaleX(1.0916);-webkit-text-stroke:0.9px #34323d">Yes</div>
<div class="t" style="left:973.8px;top:2362.8px;font-size:34.5px;color:#88878d;transform:scaleX(1.1128)">Not Applicable on:</div>
<div class="t" style="left:1321.9px;top:2364.0px;font-size:33.1px;color:#2b2a33;transform:scaleX(1.0622);-webkit-text-stroke:0.7px #2b2a33">Public Holiday</div>
<div class="t" style="left:1598.9px;top:2364.0px;font-size:33.1px;color:#2b2a33;transform:scaleX(1.0677);-webkit-text-stroke:0.7px #2b2a33">School Holiday</div>
<div class="t" style="left:1889.4px;top:2364.0px;font-size:33.1px;color:#2b2a33;transform:scaleX(1.0498);-webkit-text-stroke:0.7px #2b2a33">Event</div>
</section>
<section>
<div class="card" style="left:851px;top:2496.6px;width:2743.6px;height:853px;border-left-color:#739f37"></div>
<div class="tile" style="left:906.9px;top:2535.1px;background:#739f37"></div>
<svg class="i" style="left:906.9px;top:2535.1px" width="106.4" height="106.4" viewBox="906.9 2535.1 106.4 106.4" fill="none" stroke="#fff" stroke-width="3.5" ><path d="M982.1 2579.4A23.7 23.7 0 1 0 960.1 2612.0"/><path d="M960.1 2612.0A23.7 23.7 0 0 0 983.8 2587.1" stroke-dasharray="4.4 3.2" stroke-dashoffset="4.4"/><path d="M976.1 2580.2999999999997H984.1"/><path d="M960.1 2576.5V2588.2999999999997L965.9 2594.1"/></svg>
<div class="hr" style="left:858px;top:2677.3px;width:2734.6px"></div>
<svg class="i" style="left:2713.8px;top:2773px" width="58" height="58" viewBox="2713.8 2773 58 58"><defs><clipPath id="av12802"><circle cx="2742.8" cy="2802" r="29"/></clipPath><filter id="fav12802" x="-5%" y="-5%" width="110%" height="110%"><feGaussianBlur stdDeviation=".45"/></filter></defs><g clip-path="url(#av12802)"><rect x="2713.8" y="2773" width="58" height="58" fill="#ffc9a6"/><g filter="url(#fav12802)"><path d="M 2717.8 2822.0 L 2734.8 2812.5 L 2743.8 2818.0 L 2751.8 2812.0 L 2768.8 2819.5 L 2768.8 2833.0 L 2717.8 2833.0 Z" fill="#d8747a"/><path d="M 2723.8 2818.0 L 2723.8 2833.0 M 2730.3 2815.0 L 2730.3 2833.0 M 2736.8 2814.0 L 2736.8 2833.0 M 2751.3 2814.0 L 2751.3 2833.0 M 2757.8 2815.0 L 2757.8 2833.0 M 2763.8 2818.0 L 2763.8 2833.0" stroke="#7a5a68" stroke-width="1.8" opacity=".8"/><path d="M 2726.8 2816.0 L 2726.8 2833.0 M 2733.8 2814.0 L 2733.8 2833.0 M 2754.8 2814.0 L 2754.8 2833.0 M 2760.8 2817.0 L 2760.8 2833.0" stroke="#f6cfcb" stroke-width="1.3" opacity=".8"/><path d="M 2718.8 2823.0 L 2738.8 2823.0 M 2718.8 2828.0 L 2739.8 2828.0 M 2748.8 2823.0 L 2767.8 2823.0 M 2747.8 2828.0 L 2767.8 2828.0" stroke="#8e5560" stroke-width="1.3" opacity=".6"/><path d="M 2740.8 2818.0 L 2747.2 2818.0 L 2747.6 2833.0 L 2740.4 2833.0 Z" fill="#f1eef0"/><path d="M 2738.4 2806.0 L 2749.8 2806.0 L 2750.2 2814.0 L 2744.0 2819.0 L 2738.0 2814.0 Z" fill="#d39578"/><ellipse cx="2734.2000000000003" cy="2798" rx="1.8" ry="2.6" fill="#dc9e82"/><ellipse cx="2754.0" cy="2798" rx="1.8" ry="2.6" fill="#dc9e82"/><path d="M 2734.1 2797.0 Q 2732.1 2785.0 2736.8 2780.6 Q 2740.8 2777.2 2745.8 2777.8 Q 2751.8 2778.4 2754.3 2783.0 Q 2756.0 2787.0 2754.1 2797.0 Z" fill="#3b2118"/><path d="M 2734.6 2797.0 Q 2734.8 2791.6 2736.4 2788.8 Q 2738.2 2788.2 2741.8 2787.2 Q 2746.8 2785.6 2751.2 2787.8 Q 2753.2 2790.6 2753.6 2797.0 Q 2753.6 2810.4 2744.1 2810.4 Q 2734.6 2810.4 2734.6 2797.0 Z" fill="#e8ae92"/><path d="M 2734.6 2797.0 Q 2734.8 2806.0 2738.3 2809.5 Q 2741.3 2812.4 2744.1 2812.4 Q 2747.0 2812.4 2750.0 2809.5 Q 2753.4 2806.0 2753.6 2797.0 Q 2752.4 2800.4 2750.2 2801.2 Q 2747.2 2799.6 2744.1 2799.8 Q 2741.0 2799.6 2738.0 2801.2 Q 2735.8 2800.4 2734.6 2797.0 Z" fill="#55301f"/><path d="M 2740.8 2803.2 Q 2744.1 2805.6 2747.4 2803.2 Q 2744.1 2804.0 2740.8 2803.2 Z" fill="#f4e4dc" stroke="#f4e4dc" stroke-width=".6"/><ellipse cx="2740.0" cy="2793.9" rx="1.4" ry=".95" fill="#3a241c"/><ellipse cx="2748.3" cy="2793.9" rx="1.4" ry=".95" fill="#3a241c"/><path d="M 2737.8 2791.8 Q 2740.0 2790.7 2742.2 2791.7 M 2746.1 2791.7 Q 2748.3 2790.7 2750.5 2791.8" stroke="#4a2b1f" stroke-width="1.1" fill="none"/><path d="M 2744.1 2794.5 L 2743.5 2798.3 L 2744.8 2798.5" stroke="#cf9478" stroke-width=".9" fill="none"/></g></g></svg>
<div class="badge" style="left:3398.3px;top:2778px;width:138.4px;height:57.7px"></div>
<div class="chip" style="left:1305px;top:3250.5px;width:260px;height:57px"></div>
<div class="chip" style="left:1581.5px;top:3250.5px;width:274.5px;height:57px"></div>
<div class="chip" style="left:1872.5px;top:3250.5px;width:124.5px;height:57px"></div>
<svg class="i" style="left:908px;top:2941px" width="46" height="46" viewBox="908 2941 46 46" fill="none" stroke="#a2a1c1" stroke-width="3.5" ><rect x="912.9" y="2945.9" width="36.1" height="36.3"/><path d="M923.2 2971.6 938 2956.2"/><circle cx="924.6" cy="2957.9" r="3.4" fill="#a2a1c1" stroke="none"/><circle cx="937.3" cy="2970.3" r="3.4" fill="#a2a1c1" stroke="none"/></svg>
<svg class="i" style="left:908px;top:3018px" width="46" height="48" viewBox="908 3018 46 48" fill="none" stroke="#a2a1c1" stroke-width="3.5" ><rect x="912.9" y="3025.8" width="36.1" height="36.2"/><path d="M912.9 3035.7H949M919.6 3021.4V3029.4M942 3021.4V3029.4M925.2 3048.9H938M933.4 3044.2 938.1 3048.9 933.4 3053.6"/></svg>
<svg class="i" style="left:908px;top:3096px" width="46" height="48" viewBox="908 3096 46 48" fill="none" stroke="#a2a1c1" stroke-width="3.5" ><rect x="912.9" y="3103.5" width="36.1" height="35.8"/><path d="M912.9 3113.4H949M919.6 3099.3V3107.3M942 3099.3V3107.3M925.2 3126.9H936.7"/></svg>
<svg class="i" style="left:906px;top:3172px" width="50" height="50" viewBox="906 3172 50 50" fill="none" stroke="#a2a1c1" stroke-width="3.5" ><circle cx="930.9" cy="3197" r="20.2"/><path d="M930.9 3187.2V3196.6L935.9 3201.6"/></svg>
<svg class="i" style="left:908px;top:3256px" width="46" height="50" viewBox="908 3256 46 50" fill="none" stroke="#a2a1c1" stroke-width="3.5" ><path d="M930.9 3299.3H913V3263.6H948.9V3281.4M913 3273.4H948.9M919.5 3259.2V3266.8M941.9 3259.2V3266.8"/><circle cx="941.9" cy="3292.2" r="7.2"/><path d="M937 3297 946.9 3287.4"/></svg>
<div class="abtn" style="left:3236.5px;top:3221.7px"></div>
<div class="abtn" style="left:3343.4px;top:3221.7px"></div>
<div class="abtn" style="left:3450px;top:3221.7px"></div>
<svg class="i" style="left:3255px;top:3240px" width="50" height="50" viewBox="3255 3240 50 50" fill="none" stroke="#858389" stroke-width="4" stroke-linecap="round" stroke-linejoin="round"><path d="M3261.6 3268.1Q3270.2 3256.4 3279.7 3256.4 3289.3 3256.4 3297.9 3268.1 3289.3 3279.6 3279.7 3279.6 3270.2 3279.6 3261.6 3268.1Z"/><circle cx="3279.7" cy="3268.1" r="5.1"/><path d="M3262.2 3256.6Q3279.7 3241.4 3297.3 3256.6"/></svg>
<svg class="i" style="left:3362px;top:3240px" width="50" height="50" viewBox="3362 3240 50 50" fill="none" stroke="#858389" stroke-width="4" stroke-linecap="round" stroke-linejoin="round"><path d="M3368.6 3282.6 3369 3274.8Q3369.3 3271.6 3371.6 3269.4L3392.6 3248.9Q3396.1 3245.7 3399.6 3248.9L3403.2 3252.5Q3406.2 3255.8 3403.1 3259.1L3381.6 3280Q3379.4 3282 3376.4 3282.4Z"/><path d="M3390.6 3251.2 3401.2 3261.4M3389.4 3283.2H3405.4"/></svg>
<svg class="i" style="left:3470px;top:3240px" width="46" height="50" viewBox="3470 3240 46 50" fill="none" stroke="#858389" stroke-width="4" stroke-linecap="round" stroke-linejoin="round"><path d="M3476.8 3252H3509M3486.4 3251.6Q3486.4 3246.8 3492.9 3246.8 3499.4 3246.8 3499.4 3251.6M3480 3252.4 3481.4 3276.4Q3481.8 3282.6 3487.8 3282.6H3498Q3504 3282.6 3504.4 3276.4L3505.8 3252.4"/></svg>
<div class="t" style="left:1039.9px;top:2542.9px;font-size:38.7px;color:#34323d;transform:scaleX(1.1231);-webkit-text-stroke:0.95px #34323d">Early Bird Pricing Time Frames</div>
<div class="t" style="left:1041.2px;top:2606.5px;font-size:36.4px;color:#70707e;transform:scaleX(1.0645)">Limited time, best deals. Act fast</div>
<div class="t" style="left:905.4px;top:2724.5px;font-size:34.0px;color:#88878d;transform:scaleX(1.127)">Date Applied</div>
<div class="t" style="left:1489.4px;top:2724.5px;font-size:34.0px;color:#88878d;transform:scaleX(1.1247)">Updated Date</div>
<div class="t" style="left:2092.8px;top:2724.5px;font-size:34.0px;color:#88878d;transform:scaleX(1.0767)">Rule Valid Date</div>
<div class="t" style="left:2715.0px;top:2724.5px;font-size:34.0px;color:#88878d;transform:scaleX(1.092)">Applied By</div>
<div class="t" style="left:3398.7px;top:2724.5px;font-size:34.0px;color:#88878d;transform:scaleX(1.0978)">Status:</div>
<div class="t" style="left:905.5px;top:2778.2px;font-size:36.4px;color:#34323d;transform:scaleX(1.088);-webkit-text-stroke:0.9px #34323d">12/06/23</div>
<div class="t" style="left:1490.4px;top:2778.2px;font-size:36.4px;color:#34323d;transform:scaleX(1.1598);-webkit-text-stroke:0.9px #34323d">23/06/23</div>
<div class="t" style="left:2093.9px;top:2778.2px;font-size:36.4px;color:#34323d;transform:scaleX(1.1477);-webkit-text-stroke:0.9px #34323d">23/06/23</div>
<div class="t" style="left:2779.2px;top:2785.3px;font-size:36.9px;color:#34323d;transform:scaleX(1.0995);-webkit-text-stroke:0.7px #34323d">Kristin Watson</div>
<div class="t" style="left:3418.8px;top:2794.1px;font-size:32.1px;color:#1f2b2d;transform:scaleX(1.1178);-webkit-text-stroke:0.8px #1f2b2d">Active</div>
<div class="t" style="left:905.4px;top:2885.1px;font-size:30.2px;color:#34323d;transform:scaleX(1.1393);-webkit-text-stroke:1.3px #34323d">Details</div>
<div class="t" style="left:973.8px;top:2949.8px;font-size:34.5px;color:#88878d;transform:scaleX(1.0956)">Percent Or Amount:</div>
<div class="t" style="left:1320.4px;top:2948.2px;font-size:36.4px;color:#34323d;transform:scaleX(1.1192);-webkit-text-stroke:0.9px #34323d">20%</div>
<div class="t" style="left:974.5px;top:3027.3px;font-size:34.5px;color:#88878d;transform:scaleX(1.0569)">Travel Date:</div>
<div class="t" style="left:1182.8px;top:3025.7px;font-size:36.4px;color:#34323d;transform:scaleX(1.1018);-webkit-text-stroke:0.9px #34323d">12/06/23</div>
<div class="t" style="left:973.8px;top:3104.8px;font-size:34.5px;color:#88878d;transform:scaleX(1.1047)">Block-Out Dates:</div>
<div class="t" style="left:1273.9px;top:3103.2px;font-size:36.4px;color:#34323d;transform:scaleX(1.1199);-webkit-text-stroke:0.9px #34323d">22/09/23 - 09/12/23</div>
<div class="t" style="left:974.5px;top:3182.3px;font-size:34.5px;color:#88878d;transform:scaleX(1.1011)">Applied to All Time Slot:</div>
<div class="t" style="left:1389.0px;top:3180.7px;font-size:36.4px;color:#34323d;transform:scaleX(1.0916);-webkit-text-stroke:0.9px #34323d">Yes</div>
<div class="t" style="left:973.8px;top:3264.8px;font-size:34.5px;color:#88878d;transform:scaleX(1.1128)">Not Applicable on:</div>
<div class="t" style="left:1321.9px;top:3266.0px;font-size:33.1px;color:#2b2a33;transform:scaleX(1.0622);-webkit-text-stroke:0.7px #2b2a33">Public Holiday</div>
<div class="t" style="left:1598.9px;top:3266.0px;font-size:33.1px;color:#2b2a33;transform:scaleX(1.0677);-webkit-text-stroke:0.7px #2b2a33">School Holiday</div>
<div class="t" style="left:1889.4px;top:3266.0px;font-size:33.1px;color:#2b2a33;transform:scaleX(1.0498);-webkit-text-stroke:0.7px #2b2a33">Event</div>
</section>
</main>
</div></div>
<div class="frame"></div>
</body>
</html>
